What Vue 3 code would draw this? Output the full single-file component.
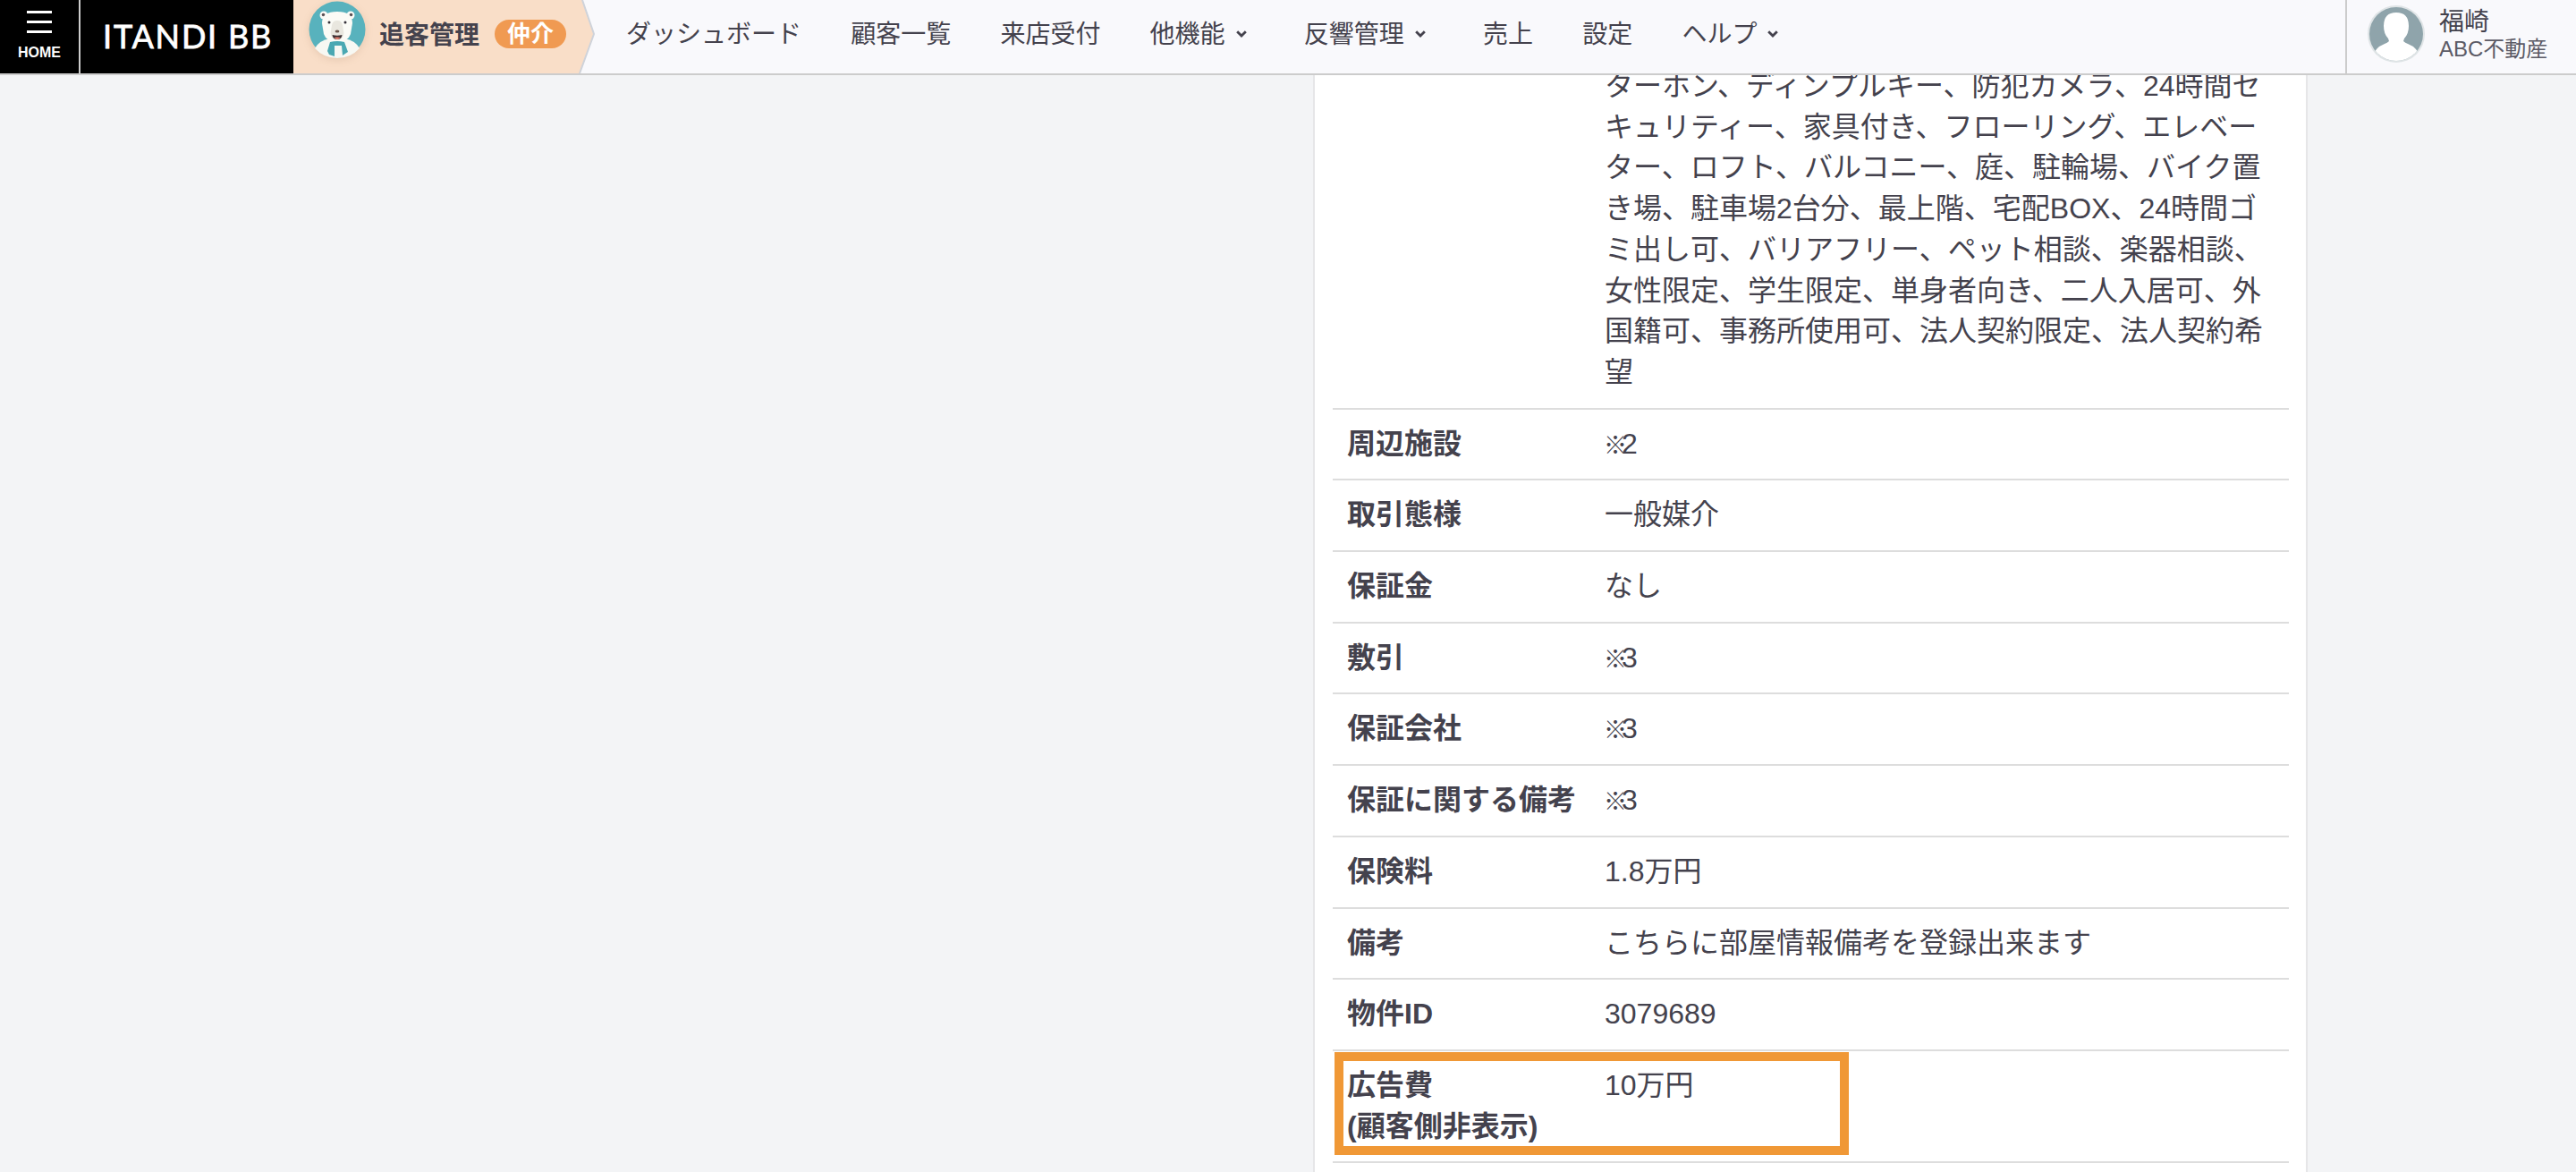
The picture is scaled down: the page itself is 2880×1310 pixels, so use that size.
<script setup>
const navItems = [
  { label: 'ダッシュボード' },
  { label: '顧客一覧' },
  { label: '来店受付' },
  { label: '他機能', caret: true },
  { label: '反響管理', caret: true },
  { label: '売上' },
  { label: '設定' },
  { label: 'ヘルプ', caret: true }
]

const rows = [
  { label: '周辺施設', note: '2' },
  { label: '取引態様', value: '一般媒介' },
  { label: '保証金', value: 'なし' },
  { label: '敷引', note: '3' },
  { label: '保証会社', note: '3' },
  { label: '保証に関する備考', note: '3' },
  { label: '保険料', value: '1.8万円' },
  { label: '備考', value: 'こちらに部屋情報備考を登録出来ます' },
  { label: '物件ID', value: '3079689' }
]
</script>

<template>
  <header class="topbar">
    <div class="home">
      <span class="burger"><i></i><i></i><i></i></span>
      <span class="home-label">HOME</span>
    </div>
    <div class="logo">ITANDI BB</div>
    <div class="crumb">
      <svg class="crumb-bg" width="338" height="82" viewBox="0 0 338 82">
        <polygon points="0,0 323,0 336,38 320,82 0,82" fill="#f9dec8" />
        <polyline points="323,0 336,38 320,82" fill="none" stroke="#cfd3da" stroke-width="2" />
      </svg>
      <svg class="bear" width="64" height="64" viewBox="0 0 64 64">
        <circle cx="32" cy="32" r="31.5" fill="#58b2bd" />
        <path d="M7 53 Q12 44 24 42 L40 42 Q52 44 57 53 Q47 64 32 64 Q17 64 7 53Z" fill="#f7f8f3" />
        <circle cx="17" cy="16" r="4.5" fill="#fbfbf6" />
        <circle cx="47" cy="16" r="4.5" fill="#fbfbf6" />
        <circle cx="16.5" cy="15.5" r="1.8" fill="#5a5055" />
        <circle cx="47.5" cy="15.5" r="1.8" fill="#5a5055" />
        <path d="M15 25 Q15 12 32 12 Q49 12 49 25 L47 37 Q44 46 32 46 Q20 46 17 37Z" fill="#fbfbf6" />
        <path d="M26 27 Q27 22 32 22 Q37 22 38 27 L39.5 36 Q38 44 32 44 Q26 44 24.5 36Z" fill="#e9e7df" />
        <circle cx="23" cy="24" r="1.5" fill="#36323a" />
        <circle cx="41" cy="24" r="1.5" fill="#36323a" />
        <ellipse cx="32" cy="34" rx="2.4" ry="1.6" fill="#6e5a50" />
        <path d="M26.5 38 Q32 39.5 37.5 38 Q37 43 32 43 Q27 43 26.5 38Z" fill="#3c2f33" />
        <path d="M28.5 41 Q32 39.8 35.5 41 Q34 43 32 43 Q30 43 28.5 41Z" fill="#e8806f" />
        <path d="M24 46 Q32 44 40 46 L44 57 L38 61 L37 50 L29 50 L29 62 L23 60 L21 56Z" fill="#4aa8b2" />
      </svg>
      <span class="crumb-title">追客管理</span>
      <span class="badge">仲介</span>
    </div>
    <nav class="nav">
      <a v-for="item in navItems" :key="item.label" class="nav-item" :class="{ 'has-caret': item.caret }">
        {{ item.label }}
        <svg v-if="item.caret" class="caret" width="12" height="8" viewBox="0 0 12 8">
          <path d="M1.2 1.2 L6 6 L10.8 1.2" fill="none" stroke="#44424d" stroke-width="2.8" />
        </svg>
      </a>
    </nav>
    <div class="user">
      <svg class="avatar" width="66" height="66" viewBox="0 0 66 66">
        <defs>
          <clipPath id="avatar-clip"><circle cx="33" cy="33" r="30" /></clipPath>
        </defs>
        <circle cx="33" cy="33" r="32" fill="#dfe4e6" />
        <circle cx="33" cy="33" r="30" fill="#8fa4ab" />
        <g clip-path="url(#avatar-clip)" fill="#fff">
          <path d="M33 9 Q47 9 47 24 Q47 33 42 38 L41 41 Q43 43 46 44 Q57 48 60 60 L33 66 L6 60 Q9 48 20 44 Q23 43 25 41 L24 38 Q19 33 19 24 Q19 9 33 9Z" />
        </g>
      </svg>
      <div class="user-text">
        <div class="user-name">福崎</div>
        <div class="user-company">ABC不動産</div>
      </div>
    </div>
  </header>

  <main class="page">
    <section class="card">
      <table class="detail">
        <tbody>
          <tr class="first">
            <th></th>
            <td>ターホン、ディンプルキー、防犯カメラ、24時間セキュリティー、家具付き、フローリング、エレベーター、ロフト、バルコニー、庭、駐輪場、バイク置き場、駐車場2台分、最上階、宅配BOX、24時間ゴミ出し可、バリアフリー、ペット相談、楽器相談、女性限定、学生限定、単身者向き、二人入居可、外国籍可、事務所使用可、法人契約限定、法人契約希望</td>
          </tr>
          <tr v-for="row in rows" :key="row.label">
            <th>{{ row.label }}</th>
            <td>
              <template v-if="row.note"><span class="mark">※</span>{{ row.note }}</template>
              <template v-else>{{ row.value }}</template>
            </td>
          </tr>
          <tr class="ad">
            <th>広告費<br />(顧客側非表示)</th>
            <td>10万円</td>
          </tr>
        </tbody>
      </table>
      <div class="highlight"></div>
    </section>
  </main>
</template>

<style>
html,
body {
  margin: 0;
  height: 1310px;
  overflow: hidden;
  background: #f3f4f6;
}
</style>

<style scoped>
.topbar {
  position: fixed;
  top: 0;
  left: 0;
  right: 0;
  z-index: 10;
  height: 82px;
  display: flex;
  align-items: stretch;
  background: #f9f9fc;
  border-bottom: 2px solid #cccccc;
  color: #44424d;
  font-family: "Liberation Sans", "Noto Sans CJK JP", sans-serif;
}

.home {
  width: 88px;
  background: #000;
  border-right: 2px solid #cccccc;
  display: flex;
  flex-direction: column;
  align-items: center;
  flex-shrink: 0;
}

.burger {
  display: flex;
  flex-direction: column;
  gap: 8px;
  margin-top: 12px;
}

.burger i {
  display: block;
  width: 28px;
  height: 3px;
  background: #fff;
}

.home-label {
  margin-top: 14px;
  color: #fff;
  font-size: 16px;
  line-height: 16px;
  font-weight: 700;
}

.logo {
  width: 238px;
  flex-shrink: 0;
  background: #000;
  color: #fff;
  font-family: Lato, sans-serif;
  font-size: 36px;
  letter-spacing: 1.8px;
  -webkit-text-stroke: 0.8px #fff;
  line-height: 80px;
  padding-left: 25px;
  box-sizing: border-box;
}

.crumb {
  position: relative;
  width: 338px;
  flex-shrink: 0;
  display: flex;
  align-items: center;
  padding-left: 17px;
  box-sizing: border-box;
}

.crumb-bg {
  position: absolute;
  left: 0;
  top: 0;
}

.bear {
  position: relative;
  margin-top: -16px;
  filter: drop-shadow(0 2px 4px rgba(120, 80, 50, 0.15));
}

.crumb-title {
  position: relative;
  margin-left: 15px;
  font-size: 28px;
  font-weight: 700;
  margin-top: -9px;
}

.badge {
  position: relative;
  margin-left: 17px;
  margin-top: -6px;
  width: 80px;
  height: 32px;
  border-radius: 16px;
  background: #f09a52;
  color: #fff;
  font-size: 26px;
  font-weight: 700;
  line-height: 32px;
  text-align: center;
}

.nav {
  display: flex;
  align-items: center;
  gap: 55.2px;
  padding-left: 34px;
  flex: 1;
  margin-top: -10px;
}

.nav-item {
  font-size: 28px;
  white-space: nowrap;
  display: flex;
  align-items: center;
  gap: 12px;
}

.nav-item.has-caret {
  padding-right: 9px;
}

.caret {
  margin-top: 4px;
}

.user {
  width: 258px;
  flex-shrink: 0;
  border-left: 2px solid #cccccc;
  box-sizing: border-box;
  display: flex;
  align-items: center;
  padding-left: 22px;
}

.avatar {
  margin-top: -6px;
}

.user-text {
  margin-left: 15px;
  margin-top: -4px;
}

.user-name {
  font-size: 28px;
  line-height: 32px;
}

.user-company {
  font-size: 24px;
  line-height: 28px;
  color: #5c5b66;
}

.page {
  width: 2880px;
  height: 1310px;
  display: flex;
  justify-content: flex-start;
  padding-left: 1468px;
  box-sizing: border-box;
  font-family: "Liberation Sans", "Noto Sans CJK JP", sans-serif;
  color: #44424d;
}

.card {
  position: relative;
  width: 1112px;
  height: 1310px;
  box-sizing: border-box;
  background: #fff;
  border-left: 2px solid #e6e6e8;
  border-right: 2px solid #e6e6e8;
  padding: 0 20px;
}

.detail {
  width: 1069px;
  border-collapse: collapse;
  table-layout: fixed;
  font-size: 32px;
  line-height: 1.42857;
}

.detail th,
.detail td {
  padding: 16px;
  text-align: left;
  vertical-align: top;
  border-bottom: 2px solid #dddddd;
}

.detail th {
  width: 256px;
  font-weight: 700;
}

.detail .first td {
  padding-top: 74px;
}

.mark {
  font-size: 26px;
  font-weight: 700;
  letter-spacing: -8px;
  margin-left: -1px;
  margin-right: 2px;
  line-height: 1;
}

.highlight {
  position: absolute;
  left: 22px;
  top: 1176px;
  width: 575px;
  height: 115px;
  box-sizing: border-box;
  border: 10px solid #f09836;
}
</style>
